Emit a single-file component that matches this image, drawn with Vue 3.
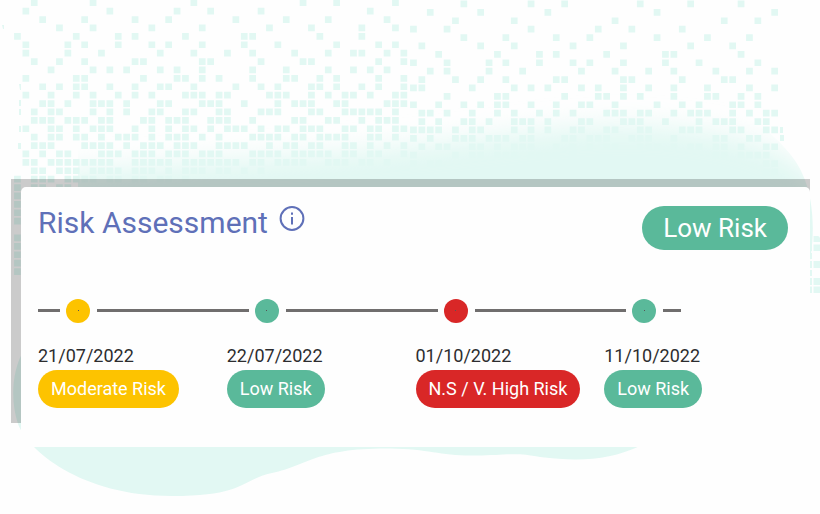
<script setup>
const PITCH = 8.4

// Filled columns of each mosaic row, top row first
const leftRows = [
  [2, 9, 21, 34, 38, 45],
  [1, 11, 19, 23, 29, 42],
  [3, 8, 14, 18, 26, 32, 37, 44],
  [5, 9, 16, 22, 30, 35, 41, 45],
  [0, 7, 12, 14, 20, 27, 28, 36, 41],
  [1, 6, 8, 12, 16, 18, 22, 27, 31, 38, 43, 45],
  [1, 6, 10, 17, 21, 25, 28, 33, 37, 40, 41, 44, 46],
  [2, 5, 8, 14, 15, 22, 23, 29, 34, 35, 43, 46],
  [4, 9, 11, 13, 17, 19, 22, 28, 32, 37, 40, 42, 44],
  [1, 7, 8, 15, 19, 20, 22, 24, 28, 32, 33, 36, 38, 43, 46],
  [3, 5, 7, 8, 11, 14, 17, 18, 21, 26, 29, 31, 35, 36, 38, 41, 43, 46],
  [1, 4, 7, 9, 12, 14, 16, 20, 21, 22, 24, 25, 30, 31, 32, 35, 37, 39, 40, 42, 45, 46],
  [3, 4, 6, 9, 10, 11, 13, 17, 18, 22, 23, 24, 27, 31, 33, 34, 35, 38, 39, 44, 45, 46],
  [2, 4, 5, 9, 11, 13, 16, 17, 20, 21, 24, 25, 29, 30, 31, 35, 36, 39, 40, 41, 42, 43, 45],
  [2, 3, 4, 6, 7, 8, 10, 11, 15, 16, 18, 19, 20, 23, 24, 25, 28, 33, 34, 37, 38, 41, 43, 44, 45],
  [1, 4, 5, 7, 9, 10, 11, 14, 16, 18, 20, 21, 23, 25, 26, 27, 29, 31, 32, 34, 35, 36, 39, 40, 42, 43, 45, 46],
  [2, 4, 5, 7, 8, 10, 12, 13, 14, 16, 18, 19, 20, 22, 24, 28, 29, 30, 31, 33, 34, 36, 37, 38, 39, 42, 43, 45],
  [2, 3, 4, 8, 9, 10, 11, 13, 15, 16, 17, 19, 20, 21, 24, 25, 26, 27, 30, 32, 33, 35, 36, 39, 40, 42, 44, 46],
  [1, 3, 5, 6, 10, 11, 12, 14, 15, 16, 18, 19, 20, 22, 23, 24, 28, 29, 30, 31, 33, 34, 35, 36, 37, 39, 40, 42, 43, 46],
  [1, 2, 4, 5, 6, 7, 8, 9, 10, 11, 14, 15, 16, 17, 18, 20, 21, 22, 23, 24, 25, 26, 28, 29, 31, 32, 33, 34, 37, 38, 39, 41, 42, 44],
  [2, 3, 5, 6, 7, 9, 10, 11, 12, 14, 15, 16, 18, 20, 21, 22, 24, 25, 27, 29],
  [0, 2, 3, 4, 6, 7, 8, 9, 11, 12, 14, 15, 17, 18, 20],
  [0, 2, 3, 5, 6], [0], [0], [0], [0], [], [0], [0], [0], [0], [0]
]

const rightRows = [
  [6, 14, 18, 27, 33, 39],
  [2, 8, 16, 29, 43],
  [5, 12, 24, 37, 41],
  [0, 4, 14, 22, 26, 32],
  [6, 11, 17, 21, 29, 35, 40],
  [1, 8, 12, 19, 25, 33, 38],
  [3, 10, 15, 17, 23, 30, 31, 39],
  [0, 4, 9, 11, 15, 19, 21, 25, 30, 34, 41],
  [2, 4, 9, 13, 20, 24, 28, 31, 36, 40, 43],
  [1, 5, 8, 11, 17, 18, 25, 26, 32, 37, 38],
  [0, 1, 7, 12, 14, 16, 20, 22, 25, 28, 31, 35, 40, 43],
  [4, 10, 11, 18, 22, 23, 25, 27, 31, 35, 36, 39, 41],
  [0, 3, 6, 8, 10, 11, 14, 17, 20, 21, 24, 29, 32, 34, 38, 39, 41],
  [1, 2, 4, 7, 10, 12, 15, 17, 19, 23, 24, 25, 27, 28, 31, 33, 34, 35, 38, 40, 42, 43],
  [1, 3, 6, 7, 9, 12, 13, 14, 16, 20, 21, 25, 26, 27, 30, 34, 36, 37, 38, 41, 42],
  [0, 1, 2, 3, 5, 7, 8, 12, 14, 16, 19, 20, 23, 24, 27, 28, 32, 33, 34, 38, 39, 42, 43],
  [0, 2, 5, 6, 7, 9, 10, 11, 13, 14, 18, 19, 21, 22, 23, 26, 27, 28, 31, 36, 37, 40, 41],
  [1, 3, 4, 7, 8, 10, 12, 13, 14, 17, 19, 21, 23, 24, 27, 28, 29, 31, 33, 34, 36, 37, 39, 42, 43],
  [0, 5, 7, 8, 10, 11, 12, 14, 15, 16, 17, 19, 36, 37, 39, 40, 41, 42],
  [0, 2, 3, 42, 43],
  [42, 43]
]

const mosaic = (rows, left, top) =>
  rows
    .flatMap((cols, r) =>
      cols.map((c) => `M${(left + c * PITCH).toFixed(1)} ${(top + r * PITCH).toFixed(1)}h6.7v6.7h-6.7z`)
    )
    .join('')

const leftMosaic = mosaic(leftRows, 14.1, -0.6)
const rightMosaic = mosaic(rightRows, 410.1, 0.6)

const assessments = [
  { date: '21/07/2022', label: 'Moderate Risk', level: 'moderate' },
  { date: '22/07/2022', label: 'Low Risk', level: 'low' },
  { date: '01/10/2022', label: 'N.S / V. High Risk', level: 'high' },
  { date: '11/10/2022', label: 'Low Risk', level: 'low' }
]
</script>

<template>
  <main class="page">
    <svg class="scenery" viewBox="0 0 820 514" preserveAspectRatio="xMidYMin slice" aria-hidden="true">
      <defs>
        <filter id="soften" x="-10%" y="-30%" width="120%" height="160%">
          <feGaussianBlur stdDeviation="13" />
        </filter>
        <clipPath id="hill">
          <path d="M78 0H640C700 100 745 112 766 130C790 150 800 166 805 180C814 204 815 236 809 266V300H78z" />
        </clipPath>
      </defs>
      <g fill="#e2f8f3">
        <path :d="leftMosaic" />
        <path :d="rightMosaic" />
        <path d="M2 25h2v4h-1zM19 84h2v6h-1zM19 100h2v6h-2zM19 109h2v6h-2zM19 126h2v6h-2zM18 143h3v6h-3zM780 127h3v6h-3zM780 135h4v6h-4z" />
        <path d="M810 236h2v6h-2zM813.500 236h4q2.500 0 2.500 3v3h-6.500zM810 244.500h2v6.500h-2zM813.500 244.500h6.500v6.500h-6.500zM810 253h2v6h-2zM810 261h2v7h-2zM813.500 261h6.500v7h-6.500zM810 270h2v6h-2zM810 278h2v7h-2zM813.500 278h6.500v7h-6.500zM810 286.500h2v6.500h-2zM813.500 286.500h6.500v6.500h-6.500z" />
        <g clip-path="url(#hill)">
          <path filter="url(#soften)" d="M60 172C150 164 220 160 300 155C400 149 480 136 580 126C660 122 720 130 760 144C800 158 850 190 860 300H60z" />
        </g>
        <path d="M24 350C12 370 10 400 18 424C28 450 80 496 172 496C245 496 240 480 272 473C310 465 315 448 390 448.500C430 449 440 456 475 455.500C510 455 515 452 540 457C580 462 610 460 640 446V400L24 350z" />
      </g>
    </svg>

    <div class="backdrop">
      <section class="card">
        <header class="card-head">
          <h1 class="title">Risk Assessment</h1>
          <button class="info" type="button" aria-label="Info">
            <svg viewBox="0 0 26 26" aria-hidden="true">
              <circle cx="13" cy="12.500" r="11.400" fill="none" stroke="currentColor" stroke-width="2" />
              <path d="M12 11h2v7.500h-2zM12 6.500h2v2.300h-2z" fill="currentColor" />
            </svg>
          </button>
          <span class="pill pill-large low">Low Risk</span>
        </header>

        <ol class="timeline">
          <li v-for="item in assessments" :key="item.date" class="stop">
            <div class="track">
              <span class="line lead"></span>
              <span class="dot" :class="item.level"></span>
              <span class="line tail"></span>
            </div>
            <time class="date">{{ item.date }}</time>
            <span class="pill" :class="item.level">{{ item.label }}</span>
          </li>
        </ol>
      </section>
    </div>
  </main>
</template>

<style>
body {
  margin: 0;
  background: #fefefe;
}
</style>

<style scoped>
.page {
  position: relative;
  box-sizing: border-box;
  min-height: 100vh;
  padding: 179px 10px 64px 11px;
  overflow: hidden;
  font-family: Roboto, "Liberation Sans", sans-serif;
}

.scenery {
  position: absolute;
  inset: 0;
  width: 100%;
  height: 100%;
}

.backdrop {
  position: relative;
  padding: 8px 0 0 10px;
}

.backdrop::before {
  content: "";
  position: absolute;
  inset: 0 0 24px;
  background: rgba(0, 0, 0, 0.2);
}

.card {
  position: relative;
  padding: 19px 17px 39px;
  border-radius: 5px;
  background: #fefefe;
}

.card-head {
  display: flex;
  align-items: flex-start;
  padding-right: 5px;
}

.title {
  margin: 0;
  color: #5f70b8;
  font-size: 30px;
  font-weight: 400;
  line-height: 34px;
}

.info {
  width: 26px;
  height: 26px;
  margin-left: 11px;
  padding: 0;
  border: 0;
  background: none;
  color: #5f70b8;
}

.info svg {
  display: block;
}

.pill {
  border-radius: 22px;
  padding: 0 13px;
  color: #fff;
  font-size: 18px;
  line-height: 38px;
  white-space: nowrap;
}

.pill-large {
  margin-left: auto;
  padding: 0 21px;
  font-size: 26px;
  line-height: 44px;
}

.low {
  background: #5ab99a;
}

.moderate {
  background: #fdc300;
}

.high {
  background: #d92727;
}

.timeline {
  display: grid;
  grid-template-columns: repeat(4, 1fr);
  margin: 48px 0 0;
  padding: 0;
  list-style: none;
}

.stop {
  display: flex;
  flex-direction: column;
  align-items: flex-start;
}

.track {
  display: flex;
  align-items: center;
  align-self: stretch;
  height: 25px;
}

.line {
  height: 3px;
  background: #706e6e;
}

.lead {
  width: 22px;
}

.tail {
  flex: 1;
}

.stop:last-child .tail {
  flex: 0 0 18px;
}

.dot {
  display: grid;
  place-items: center;
  width: 24px;
  height: 24px;
  margin: 0 7px 0 6px;
  border-radius: 50%;
}

.dot::after {
  content: "";
  width: 1px;
  height: 1px;
  background: #555;
}

.date {
  margin: 22px 0 3px;
  color: #2d2d2f;
  font-size: 18px;
  line-height: 22px;
}
</style>
